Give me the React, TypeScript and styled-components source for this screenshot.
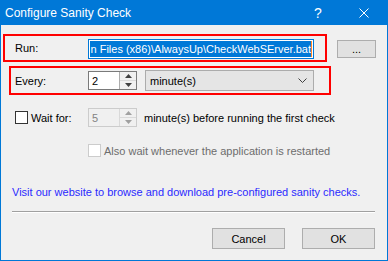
import React from 'react';
import styled, { createGlobalStyle } from 'styled-components';

const GlobalStyle = createGlobalStyle`
  html, body {
    margin: 0;
    padding: 0;
    background: #f0f0f0;
  }
  body {
    font-family: "Liberation Sans", Arial, sans-serif;
    font-size: 11px;
    color: #000;
  }
`;

const Window = styled.div`
  width: 388px;
  height: 261px;
  box-sizing: border-box;
  border: 1px solid #0078d7;
  border-top: none;
  background: #f0f0f0;
  display: flex;
  flex-direction: column;
  overflow: hidden;
`;

const TitleBar = styled.div`
  height: 25px;
  flex: none;
  background: #0078d7;
  color: #fff;
  display: flex;
  align-items: center;
`;

const Title = styled.div`
  flex: 1;
  padding-left: 4px;
  font-size: 12px;
  white-space: nowrap;
`;

const CaptionButton = styled.div`
  width: 46px;
  height: 25px;
  display: flex;
  align-items: center;
  justify-content: center;
  font-size: 14px;
`;

const Body = styled.div`
  display: flex;
  flex-direction: column;
  flex: 1;
`;

const Row = styled.div<{ $top: number; $left?: number }>`
  display: flex;
  align-items: center;
  margin-top: ${p => p.$top}px;
  margin-left: ${p => p.$left ?? 0}px;
`;

const Highlight = styled.div<{ $w: number; $h: number; $pad: number; $left: number; $top: number }>`
  box-sizing: border-box;
  width: ${p => p.$w}px;
  height: ${p => p.$h}px;
  margin-left: ${p => p.$left}px;
  margin-top: ${p => p.$top}px;
  padding-left: ${p => p.$pad}px;
  border: 2px solid #ff0000;
  display: flex;
  align-items: center;
`;

const FieldLabel = styled.span`
  width: 73px;
  flex: none;
`;

const PathInput = styled.div`
  box-sizing: border-box;
  width: 226px;
  height: 20px;
  margin-top: 2px;
  border: 1px solid #0078d7;
  background: #fff;
  display: flex;
  align-items: center;
  justify-content: flex-end;
  overflow: hidden;
  padding: 0 1px 0 1px;
`;

const Selected = styled.span`
  flex: 1;
  text-align: right;
  background: #0078d7;
  color: #fff;
  white-space: nowrap;
  line-height: 16px;
`;

const Caret = styled.span`
  width: 1px;
  height: 16px;
  background: #ff8728;
  flex: none;
`;

const PushButton = styled.div<{ $w: number; $h: number }>`
  box-sizing: border-box;
  width: ${p => p.$w}px;
  height: ${p => p.$h}px;
  flex: none;
  background: #e1e1e1;
  border: 1px solid #adadad;
  display: flex;
  align-items: center;
  justify-content: center;
`;

const SpinBox = styled.div<{ $disabled?: boolean }>`
  box-sizing: border-box;
  width: 49px;
  height: 19px;
  flex: none;
  display: flex;
  border: 1px solid ${p => (p.$disabled ? '#cccccc' : '#7a7a7a')};
  background: ${p => (p.$disabled ? '#f0f0f0' : '#fff')};
  color: ${p => (p.$disabled ? '#838383' : '#000')};
`;

const SpinText = styled.div`
  flex: 1;
  padding-left: 3px;
  display: flex;
  align-items: center;
`;

const SpinButtons = styled.div<{ $disabled?: boolean }>`
  width: 16px;
  display: flex;
  flex-direction: column;
  border-left: 1px solid ${p => (p.$disabled ? '#d9d9d9' : '#adadad')};
  background: #f0f0f0;
`;

const SpinHalf = styled.div<{ $disabled?: boolean }>`
  flex: 1;
  display: flex;
  align-items: center;
  justify-content: center;
  & + & {
    border-top: 1px solid ${p => (p.$disabled ? '#d9d9d9' : '#adadad')};
  }
`;

const Combo = styled.div`
  box-sizing: border-box;
  width: 169px;
  height: 21px;
  margin-left: 8px;
  padding: 0 6px 0 4px;
  background: #e5e5e5;
  border: 1px solid #acacac;
  display: flex;
  align-items: center;
  justify-content: space-between;
`;

const CheckBox = styled.div<{ $disabled?: boolean }>`
  box-sizing: border-box;
  width: 13px;
  height: 13px;
  flex: none;
  background: #fff;
  border: 1px solid ${p => (p.$disabled ? '#cccccc' : '#333333')};
`;

const CheckLabel = styled.span<{ $disabled?: boolean; $w?: number }>`
  margin-left: 3px;
  color: ${p => (p.$disabled ? '#6d6d6d' : '#000')};
  width: ${p => (p.$w ? `${p.$w}px` : 'auto')};
  white-space: nowrap;
`;

const Hint = styled.span`
  margin-left: 7px;
  white-space: nowrap;
`;

const Link = styled.div`
  margin: 27px 0 0 11px;
  color: #2a2aff;
  line-height: 16px;
  white-space: nowrap;
`;

const Separator = styled.div`
  height: 1px;
  margin: 11px 12px 0 11px;
  background: #a0a0a0;
  border-bottom: 1px solid #ffffff;
`;

const Footer = styled.div`
  display: flex;
  justify-content: flex-end;
  gap: 17px;
  margin: 15px 12px 0 0;
`;

const Arrow = ({ up, color }: { up?: boolean; color: string }) => (
  <svg width="7" height="4" viewBox="0 0 7 4">
    <polygon points={up ? '0,4 7,4 3.5,0' : '0,0 7,0 3.5,4'} fill={color} />
  </svg>
);

const Spinner = ({ value, disabled }: { value: string; disabled?: boolean }) => (
  <SpinBox $disabled={disabled}>
    <SpinText>{value}</SpinText>
    <SpinButtons $disabled={disabled}>
      <SpinHalf $disabled={disabled}>
        <Arrow up color={disabled ? '#a0a0a0' : '#404040'} />
      </SpinHalf>
      <SpinHalf $disabled={disabled}>
        <Arrow color={disabled ? '#a0a0a0' : '#404040'} />
      </SpinHalf>
    </SpinButtons>
  </SpinBox>
);

export default function App() {
  return (
    <>
      <GlobalStyle />
      <Window>
        <TitleBar>
          <Title>Configure Sanity Check</Title>
          <CaptionButton>?</CaptionButton>
          <CaptionButton>
            <svg width="10" height="10" viewBox="0 0 10 10">
              <path d="M0.5 0.5 L9.5 9.5 M9.5 0.5 L0.5 9.5" stroke="#fff" strokeWidth="1" />
            </svg>
          </CaptionButton>
        </TitleBar>
        <Body>
          <Row $top={0}>
            <Highlight $w={324} $h={28} $pad={10} $left={2} $top={9}>
              <FieldLabel>Run:</FieldLabel>
              <PathInput>
                <Selected>n Files (x86)\AlwaysUp\CheckWebSErver.bat</Selected>
                <Caret />
              </PathInput>
            </Highlight>
            <Row $top={11} $left={10}>
              <PushButton $w={39} $h={18}>...</PushButton>
            </Row>
          </Row>
          <Highlight $w={322} $h={29} $pad={4} $left={8} $top={4}>
            <FieldLabel>Every:</FieldLabel>
            <Spinner value="2" />
            <Combo>
              <span>minute(s)</span>
              <svg width="9" height="5" viewBox="0 0 9 5">
                <path d="M0.5 0.5 L4.5 4.5 L8.5 0.5" stroke="#404040" fill="none" strokeWidth="1" />
              </svg>
            </Combo>
          </Highlight>
          <Row $top={13} $left={14}>
            <CheckBox />
            <CheckLabel $w={57}>Wait for:</CheckLabel>
            <Spinner value="5" disabled />
            <Hint>minute(s) before running the first check</Hint>
          </Row>
          <Row $top={17} $left={87}>
            <CheckBox $disabled />
            <CheckLabel $disabled>Also wait whenever the application is restarted</CheckLabel>
          </Row>
          <Link>Visit our website to browse and download pre-configured sanity checks.</Link>
          <Separator />
          <Footer>
            <PushButton $w={73} $h={21}>Cancel</PushButton>
            <PushButton $w={73} $h={21}>OK</PushButton>
          </Footer>
        </Body>
      </Window>
    </>
  );
}
